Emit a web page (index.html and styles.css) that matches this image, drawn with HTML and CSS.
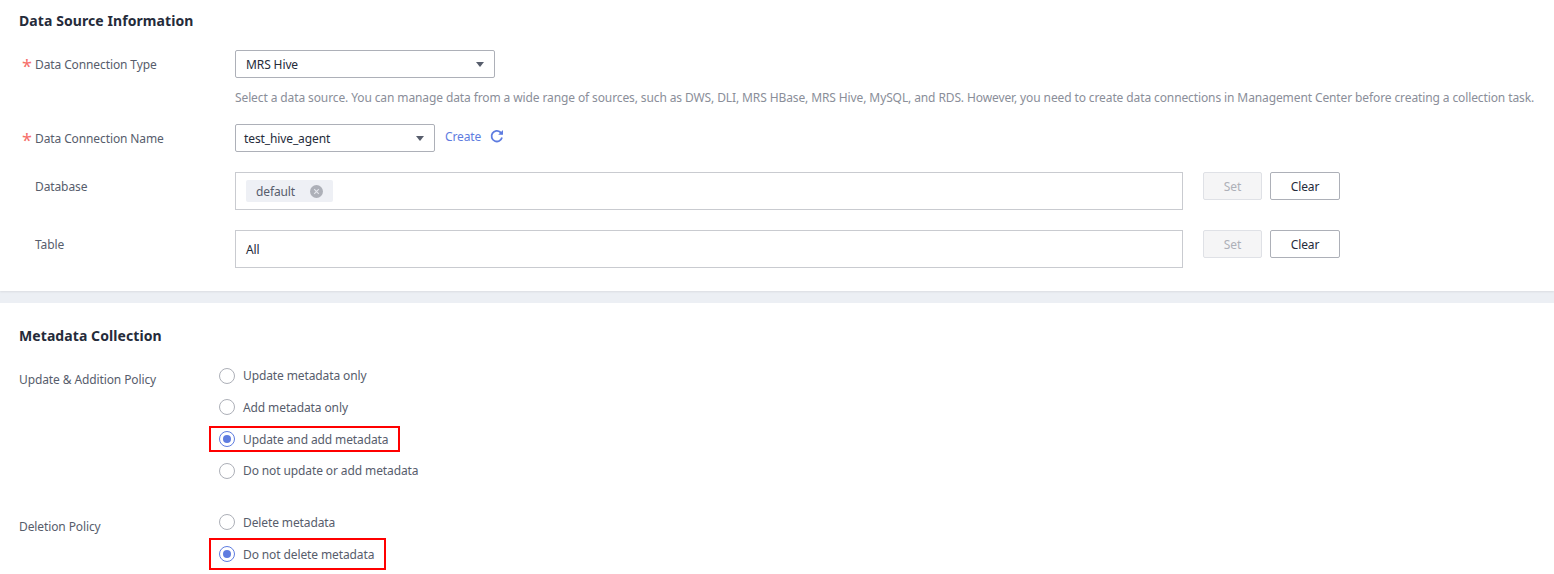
FILE: index.html
```html
<!DOCTYPE html>
<html lang="en">
<head>
<meta charset="utf-8">
<title>Metadata Collection</title>
<link rel="stylesheet" href="styles.css">
</head>
<body>
<section class="panel panel-source">
  <h2 class="title">Data Source Information</h2>
  <div class="row row-type">
    <label class="label required">Data Connection Type</label>
    <div class="field">
      <div class="select select-wide"><span>MRS Hive</span><i class="caret"></i></div>
      <p class="help">Select a data source. You can manage data from a wide range of sources, such as DWS, DLI, MRS HBase, MRS Hive, MySQL, and RDS. However, you need to create data connections in Management Center before creating a collection task.</p>
    </div>
  </div>
  <div class="row row-name">
    <label class="label required">Data Connection Name</label>
    <div class="field field-inline">
      <div class="select select-narrow"><span>test_hive_agent</span><i class="caret"></i></div>
      <a class="link">Create</a>
      <svg class="refresh" width="14" height="14" viewBox="0 0 14 14" fill="none"><path d="M12 8.6A5.3 5.3 0 1 1 10.4 3.2L12 4.8" stroke="#5e7ce0" stroke-width="1.8"/><path d="M13 1V5.8H8.2Z" fill="#5e7ce0"/></svg>
    </div>
  </div>
  <div class="row row-db">
    <label class="label">Database</label>
    <div class="field field-inline">
      <div class="box"><span class="tag">default<svg class="tag-x" width="13" height="13" viewBox="0 0 13 13"><circle cx="6.5" cy="6.5" r="6.5" fill="#adb0b8"/><path d="M4.2 4.2L8.8 8.8M8.8 4.2L4.2 8.8" stroke="#e4e6ec" stroke-width="1.1"/></svg></span></div>
      <button class="btn btn-disabled">Set</button>
      <button class="btn">Clear</button>
    </div>
  </div>
  <div class="row">
    <label class="label">Table</label>
    <div class="field field-inline">
      <div class="box box-text">All</div>
      <button class="btn btn-disabled">Set</button>
      <button class="btn">Clear</button>
    </div>
  </div>
</section>
<section class="panel panel-meta">
  <h2 class="title">Metadata Collection</h2>
  <div class="policy policy-update">
    <div class="policy-label">Update &amp; Addition Policy</div>
    <div class="radios">
      <div class="radio"><i class="dot"></i>Update metadata only</div>
      <div class="radio"><i class="dot"></i>Add metadata only</div>
      <div class="radio marked"><i class="dot on"></i>Update and add metadata</div>
      <div class="radio"><i class="dot"></i>Do not update or add metadata</div>
    </div>
  </div>
  <div class="policy policy-delete">
    <div class="policy-label">Deletion Policy</div>
    <div class="radios">
      <div class="radio"><i class="dot"></i>Delete metadata</div>
      <div class="radio marked marked-tall"><i class="dot on"></i>Do not delete metadata</div>
    </div>
  </div>
</section>
</body>
</html>
```
FILE: styles.css
```css
* { box-sizing: border-box; }
html, body { margin: 0; padding: 0; }
body {
  width: 1554px;
  height: 574px;
  overflow: hidden;
  background: #eceff4;
  font-family: "Noto Sans", "Open Sans", sans-serif;
  font-size: 12px;
  letter-spacing: -0.11px;
  color: #575d6c;
}
.panel { background: #fff; padding: 0 19px; }
.panel-source {
  height: 291px;
  box-shadow: 0 1px 2px rgba(0, 0, 0, 0.08);
  padding-top: 11px;
}
.panel-meta { height: 271px; margin-top: 12px; padding-top: 23px; }
.title {
  margin: 0;
  height: 20px;
  line-height: 20px;
  font-size: 14px;
  font-weight: 700;
  letter-spacing: 0.08px;
  color: #252b3a;
}
.row { display: flex; margin-bottom: 20px; }
.row-type { margin-top: 19px; margin-bottom: 16px; }
.row-name { margin-bottom: 20px; }
.label {
  flex: 0 0 216px;
  height: 28px;
  padding: 0 0 0 16px;
  line-height: 30px;
  position: relative;
}
.required::before {
  content: "*";
  position: absolute;
  left: 3px;
  top: 2px;
  line-height: 28px;
  color: #f66f6a;
  font-size: 18px;
}
.field { flex: 1; min-width: 0; }
.field-inline { display: flex; align-items: flex-start; }
.select {
  height: 28px;
  border: 1px solid #adb0b8;
  border-radius: 2px;
  display: flex;
  align-items: center;
  justify-content: space-between;
  color: #252b3a;
  background: #fff;
}
.select-wide { width: 260px; padding: 0 10px; }
.select-narrow { width: 200px; padding: 0 10px 0 8px; }
.caret {
  width: 0;
  height: 0;
  border-left: 4px solid transparent;
  border-right: 4px solid transparent;
  border-top: 5px solid #575d6c;
}
.help {
  margin: 10px 0 0;
  line-height: 20px;
  color: #8a8e99;
  white-space: nowrap;
}
.link { margin-left: 10px; line-height: 26px; color: #5e7ce0; }
.refresh { margin: 5px 0 0 9px; }
.box {
  width: 948px;
  height: 38px;
  border: 1px solid #c9cbd0;
  padding: 7px 10px;
  color: #252b3a;
}
.box-text { line-height: 26px; padding: 6px 10px; }
.tag {
  display: inline-flex;
  align-items: center;
  height: 22px;
  padding: 0 10px;
  background: #eef0f5;
  border-radius: 2px;
  color: #575d6c;
}
.tag-x { margin-left: 15px; }
.btn {
  width: 59px;
  height: 28px;
  margin-left: 8px;
  padding: 0;
  font: inherit;
  letter-spacing: inherit;
  background: #fff;
  border: 1px solid #adb0b8;
  border-radius: 2px;
  color: #252b3a;
}
.box + .btn { margin-left: 20px; }
.btn + .btn { width: 70px; }
.btn-disabled { background: #f5f5f6; border-color: #dfe1e6; color: #adb0b8; }
.policy { display: flex; }
.policy-update { margin-top: 14px; }
.policy-delete { margin-top: 20px; }
.policy-label { flex: 0 0 200px; line-height: 20px; padding-top: 10px; }
.radio {
  position: relative;
  width: max-content;
  height: 31.67px;
  display: flex;
  align-items: center;
  color: #575d6c;
}
.dot {
  width: 16px;
  height: 16px;
  margin-right: 8px;
  border: 1px solid #adb0b8;
  border-radius: 50%;
  background: #fff;
  display: flex;
  align-items: center;
  justify-content: center;
}
.dot.on { border-color: #5e7ce0; }
.dot.on::after {
  content: "";
  width: 8px;
  height: 8px;
  border-radius: 50%;
  background: #5e7ce0;
}
.marked::after {
  content: "";
  position: absolute;
  left: -10px;
  right: -12px;
  top: 3px;
  bottom: 3px;
  border: 2px solid #ff0000;
}
.marked-tall::after { top: 0; bottom: 0; }
```
